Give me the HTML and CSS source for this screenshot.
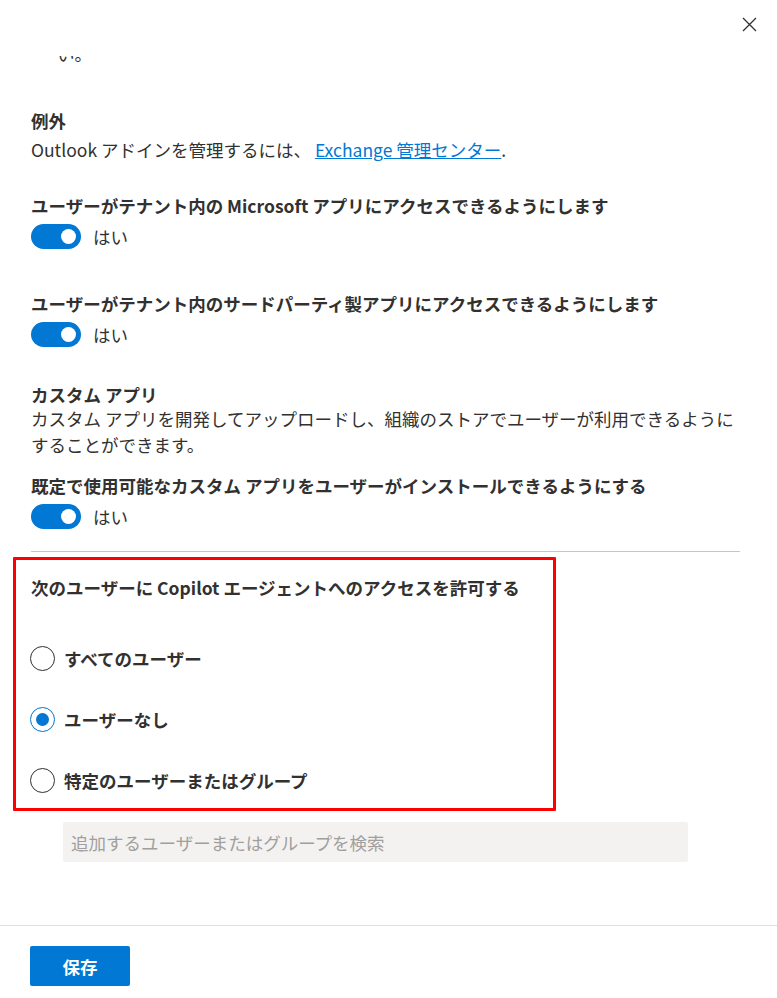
FILE: index.html
```html
<!DOCTYPE html>
<html lang="ja">

<head>
  <meta charset="utf-8">
  <meta name="viewport" content="width=device-width, initial-scale=1">
  <link rel="stylesheet" href="styles.css">
</head>

<body>

  <div class="panel">
    <div class="panel-header">
      <button class="close-btn" type="button" aria-label="閉じる">
        <svg width="15" height="15" viewBox="0 0 15 15">
          <path d="M1 1 L14 14 M14 1 L1 14" stroke="#323130" stroke-width="1.3" fill="none"/>
        </svg>
      </button>
    </div>

    <div class="panel-body">
      <p class="cut-line">い。</p>

      <div class="exception">
        <div class="label">例外</div>
        <p class="text">Outlook アドインを管理するには、 <a href="#">Exchange 管理センター</a>.</p>
      </div>

      <div class="setting first">
        <div class="label">ユーザーがテナント内の Microsoft アプリにアクセスできるようにします</div>
        <div class="toggle-row">
          <span class="toggle"><span class="thumb"></span></span>
          <span class="toggle-text">はい</span>
        </div>
      </div>

      <div class="setting second">
        <div class="label">ユーザーがテナント内のサードパーティ製アプリにアクセスできるようにします</div>
        <div class="toggle-row">
          <span class="toggle"><span class="thumb"></span></span>
          <span class="toggle-text">はい</span>
        </div>
      </div>

      <div class="custom-apps">
        <div class="label">カスタム アプリ</div>
        <p class="text custom-desc">カスタム アプリを開発してアップロードし、組織のストアでユーザーが利用できるようにすることができます。</p>
      </div>

      <div class="setting third">
        <div class="label">既定で使用可能なカスタム アプリをユーザーがインストールできるようにする</div>
        <div class="toggle-row">
          <span class="toggle"><span class="thumb"></span></span>
          <span class="toggle-text">はい</span>
        </div>
      </div>

      <hr class="divider">

      <div class="copilot-box">
        <div class="label">次のユーザーに Copilot エージェントへのアクセスを許可する</div>
        <div class="radio-list">
          <label class="radio-row">
            <span class="radio"></span>
            <span class="radio-text">すべてのユーザー</span>
          </label>
          <label class="radio-row">
            <span class="radio checked"></span>
            <span class="radio-text">ユーザーなし</span>
          </label>
          <label class="radio-row">
            <span class="radio"></span>
            <span class="radio-text">特定のユーザーまたはグループ</span>
          </label>
        </div>
      </div>

      <input class="search" type="text" placeholder="追加するユーザーまたはグループを検索" disabled>
    </div>

    <div class="panel-footer">
      <button class="save-btn" type="button">保存</button>
    </div>
  </div>

</body>

</html>
```

FILE: styles.css
```css
* {
  box-sizing: border-box;
}

body {
  margin: 0;
  font-family: "Noto Sans CJK JP", "Noto Sans", sans-serif;
  font-size: 17.5px;
  line-height: 25px;
  color: #323130;
  background-color: white;
}

p {
  margin: 0;
}

/* Panel frame */
.panel {
  display: flex;
  flex-direction: column;
  width: 777px;
  height: 998px;
  overflow: hidden;
}

.panel-header {
  display: flex;
  justify-content: flex-end;
  height: 56px;
  padding: 17px 20px 0 0;
  flex-shrink: 0;
  background-color: white;
}

.close-btn {
  width: 15px;
  height: 15px;
  padding: 0;
  border: none;
  background: none;
  cursor: pointer;
}

.close-btn svg {
  display: block;
}

/* Scrolled content: the top line is cut by the header */
.panel-body {
  height: 869px;
  flex-shrink: 0;
  padding: 0 37px 0 31px;
  overflow: hidden;
}

.cut-line {
  margin-top: -15px;
  padding-left: 26px;
}

.label {
  font-weight: 700;
}

.exception {
  margin-top: 42px;
}

.exception .text {
  margin-top: 4px;
}

a {
  color: #0078d4;
  text-decoration: underline;
}

/* Toggle settings */
.setting.first {
  margin-top: 31px;
}

.setting.second {
  margin-top: 42px;
}

.setting.third {
  margin-top: 15px;
}

.toggle-row {
  display: flex;
  align-items: center;
  margin-top: 6px;
}

.toggle {
  display: flex;
  align-items: center;
  justify-content: flex-end;
  width: 50px;
  height: 25px;
  padding-right: 5px;
  border-radius: 13px;
  background-color: #0078d4;
}

.thumb {
  width: 15px;
  height: 15px;
  border-radius: 50%;
  background-color: white;
}

.toggle-text {
  margin-left: 12px;
}

.custom-apps {
  margin-top: 35px;
}

.custom-desc {
  margin-top: -1px;
  line-height: 26px;
}

.divider {
  margin: 22px 0 0 0;
  border: none;
  border-top: 1px solid #c8c6c4;
}

/* Copilot section, marked with a red frame */
.copilot-box {
  width: 543px;
  margin: 5px 0 0 -18px;
  padding: 15px 0 15px 15px;
  border: 3px solid #ff0000;
  border-radius: 1px;
}

.radio-list {
  display: flex;
  flex-direction: column;
  gap: 36px;
  margin-top: 46px;
}

.radio-row {
  display: flex;
  align-items: center;
  height: 25px;
  margin-left: -1px;
}

.radio {
  display: flex;
  align-items: center;
  justify-content: center;
  width: 25px;
  height: 25px;
  border: 1.3px solid #323130;
  border-radius: 50%;
}

.radio.checked {
  border-color: #0078d4;
}

.radio.checked::after {
  content: "";
  width: 13px;
  height: 13px;
  border-radius: 50%;
  background-color: #0078d4;
}

.radio-text {
  margin-left: 9px;
  font-weight: 700;
}

.search {
  display: block;
  width: 625px;
  height: 40px;
  margin: 11px 0 0 32px;
  padding: 0 8px;
  border: none;
  border-radius: 2px;
  background-color: #f3f2f1;
  font-family: inherit;
  font-size: 17.5px;
}

.search::placeholder {
  color: #a19f9d;
}

/* Footer */
.panel-footer {
  flex-shrink: 0;
  padding: 20px 31px 0 30px;
  border-top: 1px solid #e1dfdd;
}

.save-btn {
  width: 100px;
  height: 40px;
  border: none;
  border-radius: 2px;
  background-color: #0078d4;
  color: white;
  font-family: inherit;
  font-size: 17.5px;
  font-weight: 700;
  cursor: pointer;
}
```
